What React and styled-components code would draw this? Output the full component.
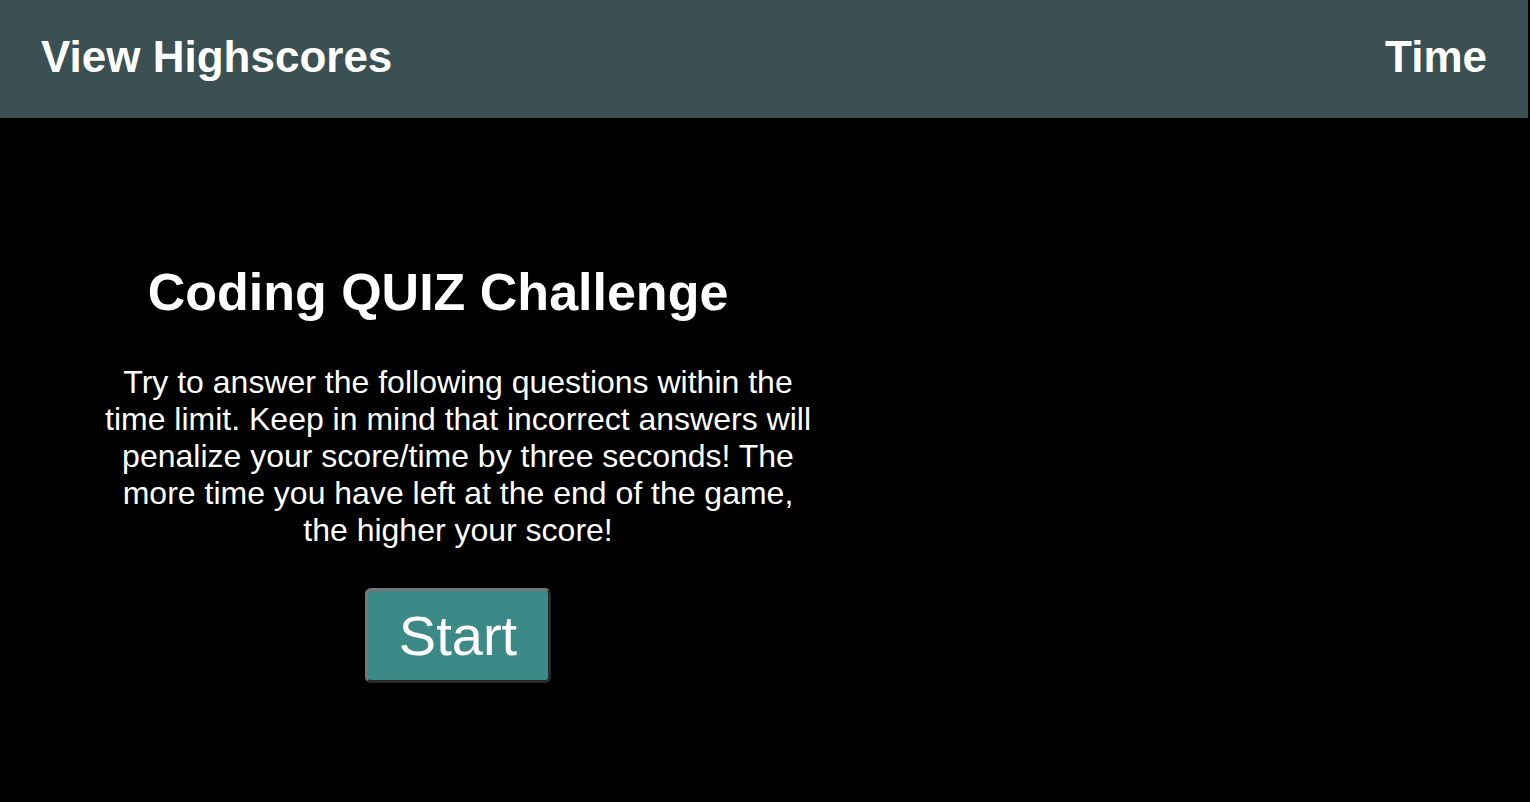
import React from "react";
import styled, { createGlobalStyle } from "styled-components";

const Global = createGlobalStyle`
  html, body { margin: 0; padding: 0; background: #000; }
  body { font-family: "Liberation Sans", Arial, Helvetica, sans-serif; color: #fff; }
`;

const Header = styled.header`
  display: flex;
  justify-content: space-between;
  align-items: center;
  height: 118px;
  margin-right: 2px;
  padding: 0 41px 4px 41px;
  box-sizing: border-box;
  background: #3a5052;
`;

const NavText = styled.a`
  font-size: 44px;
  font-weight: 700;
  color: #fff;
  text-decoration: none;
`;

const Main = styled.main`
  display: flex;
  padding-top: 144px;
`;

const Intro = styled.section`
  width: 710px;
  margin-left: 103px;
  display: flex;
  flex-direction: column;
  align-items: center;
  text-align: center;
`;

const Title = styled.h1`
  margin: 0 40px 0 0;
  font-size: 52px;
  font-weight: 700;
  line-height: 60px;
`;

const Blurb = styled.p`
  margin: 42px 0 0 0;
  font-size: 32px;
  line-height: 37px;
`;

const StartButton = styled.button`
  margin-top: 39px;
  padding: 13px 31px 12px;
  font-family: "Liberation Sans", Arial, sans-serif;
  font-size: 56px;
  line-height: 64px;
  color: #fff;
  background: #3b8a88;
  border: 3px solid;
  border-color: #777 #2a2a2a #2a2a2a #777;
  border-radius: 6px;
  cursor: pointer;
`;

export default function App() {
  return (
    <>
      <Global />
      <Header>
        <NavText href="#">View Highscores</NavText>
        <NavText as="span">Time</NavText>
      </Header>
      <Main>
        <Intro>
          <Title>Coding QUIZ Challenge</Title>
          <Blurb>
            Try to answer the following questions within the time limit. Keep in
            mind that incorrect answers will penalize your score/time by three
            seconds! The more time you have left at the end of the game, the
            higher your score!
          </Blurb>
          <StartButton>Start</StartButton>
        </Intro>
      </Main>
    </>
  );
}
